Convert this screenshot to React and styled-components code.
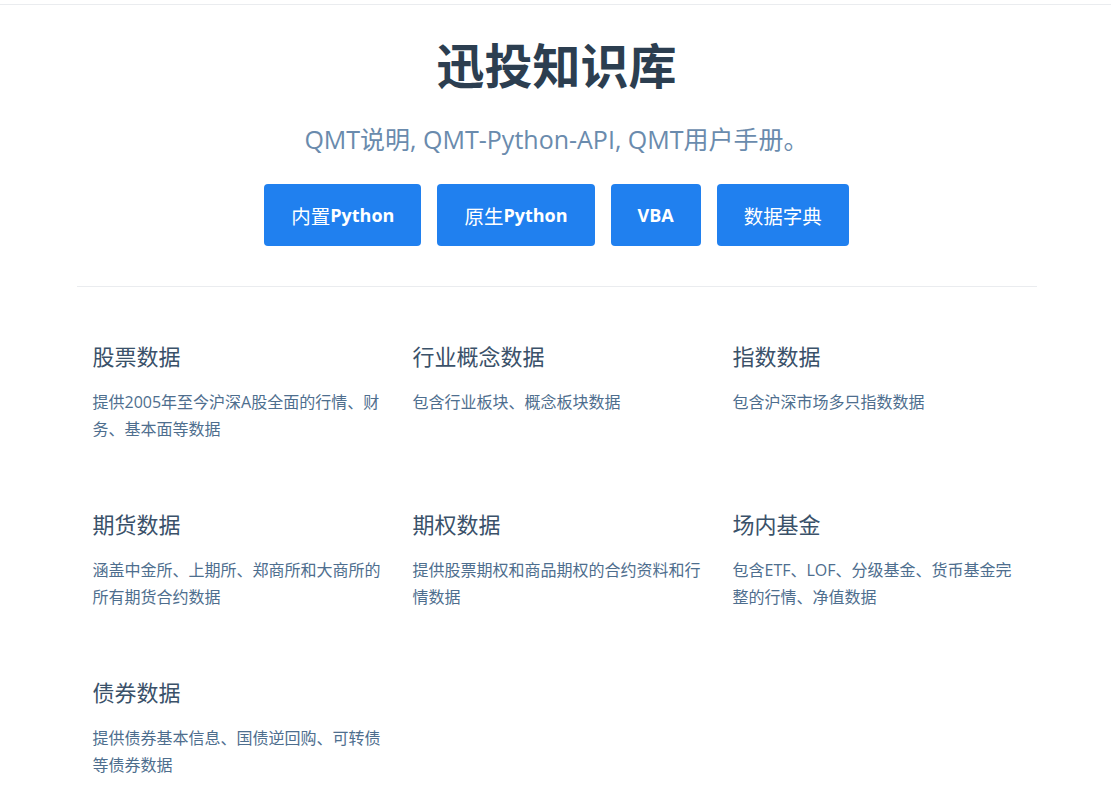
import React from 'react';
import styled, { createGlobalStyle } from 'styled-components';

const GlobalStyle = createGlobalStyle`
  html, body {
    margin: 0;
    padding: 0;
    background: #fff;
  }
  body {
    font-family: "Open Sans", "Noto Sans CJK SC", sans-serif;
    color: #2c3e50;
    -webkit-font-smoothing: antialiased;
  }
`;

const actions = [
  { cn: '内置', en: 'Python' },
  { cn: '原生', en: 'Python' },
  { cn: '', en: 'VBA' },
  { cn: '数据字典', en: '' },
];

const features = [
  { title: '股票数据', text: '提供2005年至今沪深A股全面的行情、财务、基本面等数据' },
  { title: '行业概念数据', text: '包含行业板块、概念板块数据' },
  { title: '指数数据', text: '包含沪深市场多只指数数据' },
  { title: '期货数据', text: '涵盖中金所、上期所、郑商所和大商所的所有期货合约数据' },
  { title: '期权数据', text: '提供股票期权和商品期权的合约资料和行情数据' },
  { title: '场内基金', text: '包含ETF、LOF、分级基金、货币基金完整的行情、净值数据' },
  { title: '债券数据', text: '提供债券基本信息、国债逆回购、可转债等债券数据' },
];

const App = () => {
  return (
    <>
      <GlobalStyle />
      <TopBar />
      <Home>
        <Hero>
          <Title>迅投知识库</Title>
          <Description>QMT说明, QMT-Python-API, QMT用户手册。</Description>
          <Actions>
            {actions.map((a, i) => (
              <ActionButton key={i}>
                {a.cn && <Cjk>{a.cn}</Cjk>}
                {a.en}
              </ActionButton>
            ))}
          </Actions>
        </Hero>
        <Features>
          {features.map((f) => (
            <Feature key={f.title}>
              <FeatureTitle>{f.title}</FeatureTitle>
              <FeatureText>{f.text}</FeatureText>
            </Feature>
          ))}
        </Features>
      </Home>
    </>
  );
};

const TopBar = styled.div`
  height: 4px;
  border-bottom: 1px solid #eaecef;
`;

const Home = styled.main`
  width: 960px;
  margin: 0 auto;
  padding-left: 2px;
`;

const Hero = styled.header`
  display: flex;
  flex-direction: column;
  align-items: center;
  padding-top: 30px;
`;

const Title = styled.h1`
  margin: 0;
  font-family: "Noto Sans CJK SC", sans-serif;
  font-size: 48px;
  font-weight: 700;
  line-height: 57.6px;
  color: #2c3e50;
`;

const Description = styled.p`
  margin: 30px 0 0;
  font-size: 25px;
  line-height: 33px;
  color: #6a8bad;
`;

const Actions = styled.div`
  display: flex;
  gap: 16px;
  margin-top: 28.5px;
`;

const ActionButton = styled.a`
  display: flex;
  align-items: center;
  justify-content: center;
  height: 62px;
  padding: 0 27px;
  box-sizing: border-box;
  border-radius: 4px;
  background: #2080ef;
  color: #fff;
  font-size: 18px;
  font-weight: 700;
  cursor: pointer;
`;

const Cjk = styled.span`
  font-family: "Noto Sans CJK SC", sans-serif;
  font-size: 19.5px;
  font-weight: 400;
`;

const Features = styled.section`
  display: grid;
  grid-template-columns: repeat(3, 288px);
  column-gap: 32px;
  row-gap: 66px;
  margin-top: 40px;
  padding: 54px 16px 20px;
  border-top: 1px solid #eaecef;
`;

const Feature = styled.div`
  display: flex;
  flex-direction: column;
`;

const FeatureTitle = styled.h2`
  margin: 0;
  font-family: "Noto Sans CJK SC", sans-serif;
  font-size: 22px;
  font-weight: 400;
  line-height: 29px;
  color: #3a5169;
`;

const FeatureText = styled.p`
  margin: 19px 0 0;
  font-size: 16px;
  line-height: 27px;
  color: #4e6e8e;
`;

export default App;
